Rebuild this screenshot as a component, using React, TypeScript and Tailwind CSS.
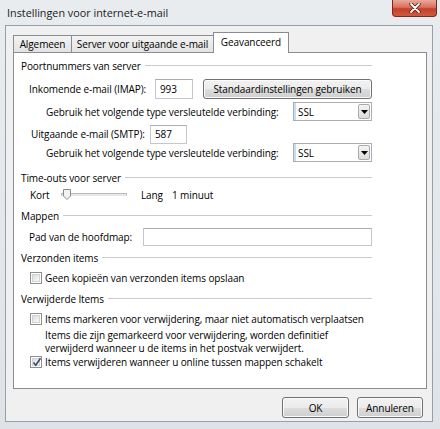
import React from 'react';

function GroupHeader({ title, className = '' }: { title: string; className?: string }) {
  return (
    <div className={`flex h-[14px] items-center ${className}`}>
      <span>{title}</span>
      <div className="ml-[4px] mt-[-1px] flex-1">
        <div className="h-px bg-[#c5cbd1]" />
        <div className="h-px bg-white" />
      </div>
    </div>
  );
}

function TextBox({ value = '', className = '' }: { value?: string; className?: string }) {
  return (
    <div
      className={`flex items-center border border-[#c3c7cf] border-t-[#abadb3] bg-white pl-[4px] ${className}`}
    >
      {value}
    </div>
  );
}

function Dropdown({ value }: { value: string }) {
  return (
    <div className="flex h-[19px] w-[79px] items-center border border-[#abadb3] bg-white">
      <div className="h-full w-[2px] bg-[#c6def5]" />
      <span className="ml-[2px] flex-1">{value}</span>
      <div className="mr-[1px] flex h-[15px] w-[12px] items-center justify-center rounded-[2px] border border-[#a7abb0] bg-gradient-to-b from-[#f4f4f4] to-[#dcdcdc]">
        <svg width="7" height="4" viewBox="0 0 7 4">
          <path d="M0 0 H7 L3.5 4 Z" fill="#000" />
        </svg>
      </div>
    </div>
  );
}

function Checkbox({ checked = false }: { checked?: boolean }) {
  return (
    <div className="relative h-[12px] w-[12px] shrink-0 border border-[#8e8f8f] bg-white p-px">
      <div className="h-full w-full border border-[#d3d3d3] bg-gradient-to-br from-[#dcdcdc] to-[#fbfbfb]" />
      {checked && (
        <svg className="absolute left-[1px] top-[0px]" width="10" height="10" viewBox="0 0 10 10">
          <path d="M1.5 5.5 L3.8 8.2 L8.5 1.2" fill="none" stroke="#3a4a74" strokeWidth="1.6" />
        </svg>
      )}
    </div>
  );
}

function WinButton({ label, className = '' }: { label: string; className?: string }) {
  return (
    <div
      className={`rounded-[3px] border border-[#707070] bg-[linear-gradient(to_bottom,#f2f2f2_0%,#ebebeb_50%,#dddddd_51%,#cfcfcf_100%)] shadow-[inset_0_0_0_1px_#fcfcfc] flex items-center justify-center ${className}`}
    >
      {label}
    </div>
  );
}

export default function App() {
  return (
    <div className="relative h-[429px] w-[440px] overflow-hidden whitespace-nowrap bg-[linear-gradient(to_bottom,#e9ecef,#dfe3e7)] font-['Open_Sans','Noto_Sans',sans-serif] text-[10px] leading-[14px] tracking-[-0.1px] text-black">
      {/* title bar */}
      <div className="flex h-[25px] items-start">
        <span className="ml-[7px] mt-[6px] text-[10.8px] tracking-normal text-[#1a1a1a]">Instellingen voor internet-e-mail</span>
        <div className="ml-auto mr-[3px] flex h-[17px] w-[45px] items-center justify-center rounded-b-[4px] border border-t-0 border-[#7a2a1c] bg-[linear-gradient(to_bottom,#e9a99b_0%,#d7725f_45%,#c4402a_55%,#d45a3c_100%)]">
          <svg width="12" height="10" viewBox="0 0 12 10">
            <path d="M2 1 L10 9 M10 1 L2 9" stroke="#4a1a12" strokeWidth="3.4" strokeLinecap="round" />
            <path d="M2 1 L10 9 M10 1 L2 9" stroke="#fff" strokeWidth="1.8" strokeLinecap="round" />
          </svg>
        </div>
      </div>

      {/* client area */}
      <div className="ml-[5px] h-[397px] w-[428px] border border-[#979fa8] bg-[#f0f0f0]">
        {/* tabs */}
        <div className="relative z-10 ml-[7px] mt-[6px] flex h-[20px] items-end">
          <div className="flex h-[17px] w-[59px] items-center justify-center border border-b-0 border-[#898c95] bg-gradient-to-b from-[#f3f3f3] to-[#e3e3e3]">
            Algemeen
          </div>
          <div className="-ml-px flex h-[17px] w-[143px] items-center justify-center border border-b-0 border-[#898c95] bg-gradient-to-b from-[#f3f3f3] to-[#e3e3e3]">
            Server voor uitgaande e-mail
          </div>
          <div className="-ml-px mb-[-1px] flex h-[21px] w-[76px] items-start justify-center border border-b-0 border-[#898c95] bg-white pt-[2px]">
            Geavanceerd
          </div>
        </div>

        {/* tab panel */}
        <div className="ml-[7px] h-[337px] w-[414px] border border-[#898c95] bg-white pl-[7px] pt-[6px]">
          <div className="w-[351px]">
            <GroupHeader title="Poortnummers van server" />

            <div className="mt-[6px] flex h-[20px] items-center">
              <span className="ml-[8px] w-[126px]">Inkomende e-mail (IMAP):</span>
              <TextBox value="993" className="h-[20px] w-[38px]" />
              <WinButton label="Standaardinstellingen gebruiken" className="ml-[10px] h-[20px] flex-1" />
            </div>

            <div className="mt-[3px] flex h-[19px] items-center">
              <span className="ml-[25px] flex-1">Gebruik het volgende type versleutelde verbinding:</span>
              <Dropdown value="SSL" />
            </div>

            <div className="mt-[4px] flex h-[18px] items-center">
              <span className="ml-[10px] w-[119px]">Uitgaande e-mail (SMTP):</span>
              <TextBox value="587" className="h-[19px] w-[37px]" />
            </div>

            <div className="flex h-[19px] items-center">
              <span className="ml-[25px] flex-1">Gebruik het volgende type versleutelde verbinding:</span>
              <Dropdown value="SSL" />
            </div>

            <GroupHeader title="Time-outs voor server" className="mt-[9px]" />

            <div className="mt-[3px] flex h-[14px] items-center">
              <span className="ml-[9px] w-[31px]">Kort</span>
              <div className="relative h-[14px] w-[66px]">
                <div className="absolute left-0 right-0 top-[5px] h-[3px] border border-[#b9b9b9] border-b-[#e6e6e6] bg-[#e9e9e9]" />
                <svg className="absolute left-[2px] top-[1px]" width="8" height="11" viewBox="0 0 8 11">
                  <path d="M0.5 0.5 H7.5 V7 L4 10.5 L0.5 7 Z" fill="#f2f2f2" stroke="#8a8a8a" />
                </svg>
              </div>
              <span className="ml-[14px] w-[31px]">Lang</span>
              <span>1 minuut</span>
            </div>

            <GroupHeader title="Mappen" className="mt-[7px]" />

            <div className="mt-[5px] flex h-[17px] items-center">
              <span className="ml-[8px] w-[114px]">Pad van de hoofdmap:</span>
              <TextBox className="h-[18px] flex-1" />
            </div>

            <GroupHeader title="Verzonden items" className="mt-[6px]" />

            <div className="mt-[6px] flex h-[14px] items-center">
              <div className="ml-[9px]">
                <Checkbox />
              </div>
              <span className="ml-[3px]">Geen kopieën van verzonden items opslaan</span>
            </div>

            <GroupHeader title="Verwijderde Items" className="mt-[7px]" />

            <div className="mt-[6px] flex h-[14px] items-center">
              <div className="ml-[9px]">
                <Checkbox />
              </div>
              <span className="ml-[3px]">Items markeren voor verwijdering, maar niet automatisch verplaatsen</span>
            </div>

            <p className="ml-[24px] mt-[3px] leading-[13px]">
              Items die zijn gemarkeerd voor verwijdering, worden definitief
              <br />
              verwijderd wanneer u de items in het postvak verwijdert.
            </p>

            <div className="flex h-[14px] items-center">
              <div className="ml-[9px]">
                <Checkbox checked />
              </div>
              <span className="ml-[3px]">Items verwijderen wanneer u online tussen mappen schakelt</span>
            </div>
          </div>
        </div>

        {/* buttons */}
        <div className="mt-[8px] flex justify-end gap-[8px] pr-[9px]">
          <WinButton label="OK" className="h-[21px] w-[67px]" />
          <WinButton label="Annuleren" className="h-[21px] w-[66px]" />
        </div>
      </div>
    </div>
  );
}
